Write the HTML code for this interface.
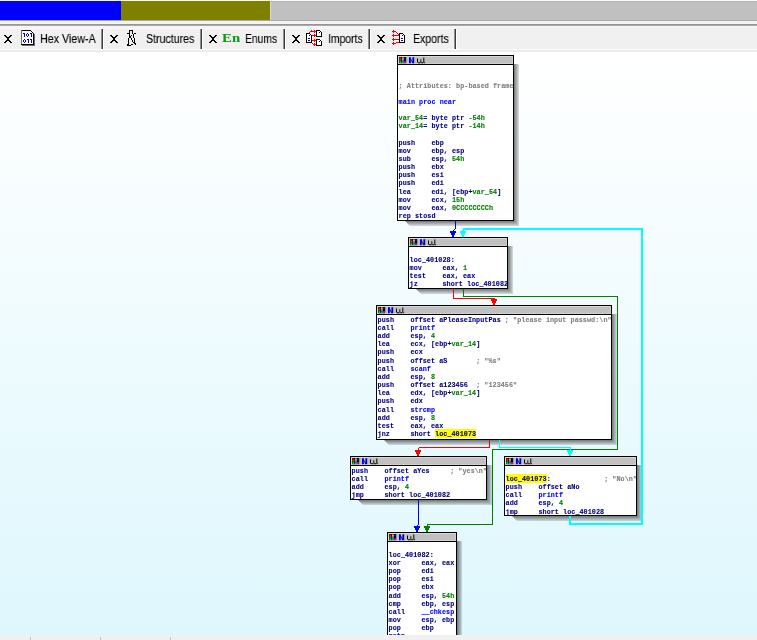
<!DOCTYPE html>
<html><head><meta charset="utf-8"><style>
html,body{margin:0;padding:0;width:757px;height:640px;overflow:hidden;background:#f0f0f0;position:relative}
div{box-sizing:border-box}
.abs{position:absolute}
.canvas{position:absolute;left:0;top:52px;width:757px;height:583px;background:linear-gradient(#ffffff,#def7fd)}
.shr{position:absolute;width:5px;background:linear-gradient(90deg,rgba(0,0,0,.52),rgba(0,0,0,.12));clip-path:polygon(0 0,100% 0,100% 100%,0 calc(100% - 5px))}
.shb{position:absolute;height:5px;background:linear-gradient(180deg,rgba(0,0,0,.52),rgba(0,0,0,.12));clip-path:polygon(0 0,calc(100% - 5px) 0,100% 100%,5px 100%)}
.blk{position:absolute;will-change:transform;border:1px solid #000;background:#fff;box-sizing:content-box;overflow:hidden}
.hdr{position:absolute;left:0;top:0;right:0;height:9px;background:#c0c0c0;border-bottom:1px solid #000;box-sizing:border-box;box-shadow:inset 1px 1px #d8d8d8,inset -1px -1px #d0d0d0}
.ln{position:absolute;left:0.6px;height:8px;font:bold 6.78px/8px "Liberation Mono",monospace;white-space:pre;color:#000080;-webkit-text-stroke:0.1px currentColor;letter-spacing:0.045px}
.sep{position:absolute;top:29px;width:1px;height:20px;background:#3c3c3c;border-left:1px solid #909090;border-right:1px solid #fff;box-sizing:content-box}
.lbl{position:absolute;top:32px;font:12.5px/14px "Liberation Sans",sans-serif;color:#000;white-space:pre;transform-origin:0 0;will-change:transform;-webkit-text-stroke:0.12px #000}
</style></head><body>
<div class="abs" style="left:0;top:0;width:757px;height:1px;background:#f8f8f8"></div><div class="abs" style="left:0;top:1px;width:121px;height:19px;background:#0000ff"></div><div class="abs" style="left:121px;top:1px;width:149px;height:19px;background:#808000"></div><div class="abs" style="left:270px;top:1px;width:1px;height:19px;background:#d8d8e0"></div><div class="abs" style="left:271px;top:1px;width:486px;height:19px;background:#c0c0c0;border-top:1px solid #b4b4b4"></div><div class="abs" style="left:0;top:20px;width:757px;height:1px;background:#a8a8a8"></div><div class="abs" style="left:0;top:21px;width:757px;height:3px;background:#f4f4f4"></div><div class="abs" style="left:0;top:24px;width:757px;height:1px;background:#969696"></div><div class="abs" style="left:0;top:25px;width:757px;height:1px;background:#a8a8a8"></div><div class="abs" style="left:0;top:26px;width:757px;height:23px;background:#f0f0f0"></div><div class="abs" style="left:0;top:26px;width:757px;height:1px;background:#f8f8f8"></div><div class="abs" style="left:0;top:27px;width:757px;height:1px;background:#f3f3f3"></div><div class="abs" style="left:0;top:28px;width:455px;height:1px;background:#fafafa"></div><div class="abs" style="left:0;top:49px;width:757px;height:1px;background:#fafafa"></div><div class="abs" style="left:0;top:50px;width:757px;height:2px;background:#ececec"></div><svg style="position:absolute;left:0;top:0" width="14" height="50" shape-rendering="crispEdges"><path d="M4 35h2v1h-2zM10 35h2v1h-2zM5 36h2v1h-2zM9 36h2v1h-2zM6 37h4v1h-4zM7 38h2v1h-2zM7 39h2v1h-2zM6 40h4v1h-4zM5 41h2v1h-2zM9 41h2v1h-2zM4 42h2v1h-2zM10 42h2v1h-2z" fill="#000"/></svg><svg style="position:absolute;left:0;top:0" width="120" height="50" shape-rendering="crispEdges"><path d="M110 35h2v1h-2zM116 35h2v1h-2zM111 36h2v1h-2zM115 36h2v1h-2zM112 37h4v1h-4zM113 38h2v1h-2zM113 39h2v1h-2zM112 40h4v1h-4zM111 41h2v1h-2zM115 41h2v1h-2zM110 42h2v1h-2zM116 42h2v1h-2z" fill="#000"/></svg><svg style="position:absolute;left:0;top:0" width="219" height="50" shape-rendering="crispEdges"><path d="M209 35h2v1h-2zM215 35h2v1h-2zM210 36h2v1h-2zM214 36h2v1h-2zM211 37h4v1h-4zM212 38h2v1h-2zM212 39h2v1h-2zM211 40h4v1h-4zM210 41h2v1h-2zM214 41h2v1h-2zM209 42h2v1h-2zM215 42h2v1h-2z" fill="#000"/></svg><svg style="position:absolute;left:0;top:0" width="302" height="50" shape-rendering="crispEdges"><path d="M292 35h2v1h-2zM298 35h2v1h-2zM293 36h2v1h-2zM297 36h2v1h-2zM294 37h4v1h-4zM295 38h2v1h-2zM295 39h2v1h-2zM294 40h4v1h-4zM293 41h2v1h-2zM297 41h2v1h-2zM292 42h2v1h-2zM298 42h2v1h-2z" fill="#000"/></svg><svg style="position:absolute;left:0;top:0" width="387" height="50" shape-rendering="crispEdges"><path d="M377 35h2v1h-2zM383 35h2v1h-2zM378 36h2v1h-2zM382 36h2v1h-2zM379 37h4v1h-4zM380 38h2v1h-2zM380 39h2v1h-2zM379 40h4v1h-4zM378 41h2v1h-2zM382 41h2v1h-2zM377 42h2v1h-2zM383 42h2v1h-2z" fill="#000"/></svg><svg style="position:absolute;left:0;top:0" width="40" height="50" shape-rendering="crispEdges"><path d="M21 30h10l3 3v12h-13z" fill="#fff"/><path d="M21 30h10v1h-10zM31 31h1v1h-1zM32 32h1v1h-1z" fill="#000"/><path d="M21 30h1v15h-1zM34 34h1v11h-1zM22 45h13v1h-13z" fill="#707070"/><path d="M33 33h1v12h-1zM21 44h13v1h-13z" fill="#000"/><path d="M24 33h1v4h-1zM23 33h1v1h-1zM27 33h1v1h-1zM26 34h1v2h-1zM28 34h1v2h-1zM27 36h1v1h-1zM31 33h1v4h-1zM30 33h1v1h-1zM24 39h1v1h-1zM23 40h1v2h-1zM25 40h1v2h-1zM24 42h1v1h-1zM28 39h1v4h-1zM27 39h1v1h-1zM31 39h1v4h-1zM30 39h1v1h-1z" fill="#0000c0"/></svg><svg style="position:absolute;left:0;top:0" width="140" height="50" shape-rendering="crispEdges"><path d="M129 30h4v1h-4zM129 31h1v3h-1zM132 31h1v3h-1zM127 33h2v1h-2zM134 33h2v1h-2zM129 34h1v4h-1zM128 38h1v6h-1zM133 34h1v4h-1zM134 38h1v5h-1zM131 35h1v1h-1zM130 36h1v2h-1zM131 38h1v2h-1zM132 40h1v2h-1zM133 42h1v1h-1zM134 43h1v1h-1zM127 44h2v2h-2zM135 43h1v2h-1zM129 45h2v1h-2zM131 44h2v1h-2z" fill="#000"/></svg><div style="position:absolute;left:221.5px;top:31px;font:bold 13px/14px 'Liberation Serif';color:#00a000;transform:scaleX(1.14);transform-origin:0 0;will-change:transform">En</div><svg style="position:absolute;left:0;top:0" width="330" height="50" shape-rendering="crispEdges"><path d="M306 33h4l2 2v8h-6z" fill="#fff"/><path d="M306 33h4v1h-4zM306 33h1v10h-1zM306 42h6v1h-6zM311 35h1v8h-1zM310 34h1v1h-1zM309 35h1v1h-1z" fill="#000"/><path d="M308 38h2v1h-2zM308 40h2v1h-2z" fill="#0000a0"/><path d="M316 30h4l2 2v5h-6z" fill="#fff"/><path d="M316 30h4v1h-4zM316 30h1v7h-1zM316 36h6v1h-6zM321 32h1v5h-1zM320 31h1v1h-1zM319 32h1v1h-1z" fill="#000"/><path d="M316 39h4l2 2v5h-6z" fill="#fff"/><path d="M316 39h4v1h-4zM316 39h1v7h-1zM316 45h6v1h-6zM321 41h1v5h-1zM320 40h1v1h-1zM319 41h1v1h-1z" fill="#000"/><path d="M309 32h1v1h-1zM310 31h1v1h-1zM311 30h1v1h-1z" fill="#f00"/><path d="M311 31h5v1h-5zM314 30h1v3h-1zM315 31h1v1h-1z" fill="#f00"/><path d="M312 35h4v1h-4zM314 34h1v3h-1zM315 35h1v1h-1z" fill="#f00"/><path d="M312 40h4v1h-4zM314 39h1v3h-1zM315 40h1v1h-1z" fill="#f00"/><path d="M312 43h1v1h-1zM313 44h1v1h-1z" fill="#f00"/><path d="M313 44h3v1h-3zM314 43h1v3h-1zM315 44h1v1h-1z" fill="#f00"/></svg><svg style="position:absolute;left:0;top:0" width="420" height="50" shape-rendering="crispEdges"><path d="M399 33h4l2 2v8h-6z" fill="#fff"/><path d="M399 33h4v1h-4zM399 33h1v10h-1zM399 42h6v1h-6zM404 35h1v8h-1zM403 34h1v1h-1zM402 35h1v1h-1z" fill="#000"/><path d="M401 38h2v1h-2zM401 40h2v1h-2z" fill="#0000a0"/><path d="M393 30h1v3h-1zM392 31h3v1h-3zM395 31h1v1h-1zM396 32h1v1h-1zM397 33h1v1h-1zM398 34h1v1h-1z" fill="#f00"/><path d="M393 34h1v3h-1zM392 35h7v1h-7z" fill="#f00"/><path d="M393 38h1v3h-1zM392 39h7v1h-7z" fill="#f00"/><path d="M393 42h1v3h-1zM392 43h4v1h-4zM396 42h3v1h-3z" fill="#f00"/></svg><div class="sep" style="left:101px"></div><div class="sep" style="left:200px"></div><div class="sep" style="left:283px"></div><div class="sep" style="left:368px"></div><div class="sep" style="left:454px"></div><div class="lbl" style="left:39.74px;transform:scaleX(0.8563)">Hex View-A</div><div class="lbl" style="left:145.95px;transform:scaleX(0.8482)">Structures</div><div class="lbl" style="left:245.18px;transform:scaleX(0.8237)">Enums</div><div class="lbl" style="left:327.97px;transform:scaleX(0.8300)">Imports</div><div class="lbl" style="left:412.96px;transform:scaleX(0.8415)">Exports</div><div class="canvas"></div><div class="shr" style="left:514px;top:64px;height:162px"></div><div class="shb" style="left:405px;top:221px;width:114px"></div><div class="blk" style="left:397px;top:55px;width:115px;height:164px"><div class="hdr"></div><svg style="position:absolute;left:0px;top:0px" width="32" height="8"><rect x="1.2" y="1" width="7" height="6.2" fill="#000"/><rect x="1.6" y="1.4" width="1.8" height="1.6" fill="#f00"/><rect x="4.2" y="1.4" width="1.5" height="1.6" fill="#ff0"/><rect x="6.1" y="1.4" width="1.8" height="1.6" fill="#00f"/><rect x="1.6" y="3.2" width="1.8" height="1.5" fill="#777"/><rect x="4.2" y="3.2" width="1.5" height="1.5" fill="#ddd"/><rect x="6.1" y="3.2" width="1.8" height="1.5" fill="#000"/><rect x="1.6" y="5.3" width="1.8" height="1.6" fill="#0f0"/><rect x="4.2" y="5.3" width="1.5" height="1.6" fill="#0ff"/><rect x="6.1" y="5.3" width="1.8" height="1.6" fill="#f0f"/><path d="M11 1.3h1.8v5.9h-1.8zM14.4 1.3h1.8v5.9h-1.8zM12.6 1.8l2 4.5v0.9h-0.4l-1.8-4.3z" fill="#0000c0"/><path d="M19 2.5h1v4h-1zM22.4 3.2h0.9v3.3h-0.9zM25.3 1.5h1v5h-1zM20 6.2h2.4v1h-2.4zM23.3 6.2h2v1h-2zM26.3 6.2h0.8v1h-0.8z" fill="#000"/></svg><div class="ln" style="top:9.00px"></div><div class="ln" style="top:17.00px"></div><div class="ln" style="top:26.00px"><span style="color:#808080">; Attributes: bp-based frame</span></div><div class="ln" style="top:34.00px"></div><div class="ln" style="top:42.00px"><span style="color:#0000ff">main proc near</span></div><div class="ln" style="top:50.00px"></div><div class="ln" style="top:58.00px"><span style="color:#008000">var_54</span><span style="color:#000080">= byte ptr </span><span style="color:#008000">-54h</span></div><div class="ln" style="top:66.00px"><span style="color:#008000">var_14</span><span style="color:#000080">= byte ptr </span><span style="color:#008000">-14h</span></div><div class="ln" style="top:74.00px"></div><div class="ln" style="top:83.00px"><span style="color:#000080">push    ebp</span></div><div class="ln" style="top:91.00px"><span style="color:#000080">mov     ebp, esp</span></div><div class="ln" style="top:99.00px"><span style="color:#000080">sub     esp, </span><span style="color:#008000">54h</span></div><div class="ln" style="top:107.00px"><span style="color:#000080">push    ebx</span></div><div class="ln" style="top:115.00px"><span style="color:#000080">push    esi</span></div><div class="ln" style="top:123.00px"><span style="color:#000080">push    edi</span></div><div class="ln" style="top:132.00px"><span style="color:#000080">lea     edi, [ebp+</span><span style="color:#008000">var_54</span><span style="color:#000080">]</span></div><div class="ln" style="top:140.00px"><span style="color:#000080">mov     ecx, </span><span style="color:#008000">15h</span></div><div class="ln" style="top:148.00px"><span style="color:#000080">mov     eax, </span><span style="color:#008000">0CCCCCCCCh</span></div><div class="ln" style="top:156.00px"><span style="color:#000080">rep stosd</span></div></div><div class="shr" style="left:508px;top:246px;height:48px"></div><div class="shb" style="left:416px;top:289px;width:97px"></div><div class="blk" style="left:408px;top:237px;width:98px;height:50px"><div class="hdr"></div><svg style="position:absolute;left:0px;top:0px" width="32" height="8"><rect x="1.2" y="1" width="7" height="6.2" fill="#000"/><rect x="1.6" y="1.4" width="1.8" height="1.6" fill="#f00"/><rect x="4.2" y="1.4" width="1.5" height="1.6" fill="#ff0"/><rect x="6.1" y="1.4" width="1.8" height="1.6" fill="#00f"/><rect x="1.6" y="3.2" width="1.8" height="1.5" fill="#777"/><rect x="4.2" y="3.2" width="1.5" height="1.5" fill="#ddd"/><rect x="6.1" y="3.2" width="1.8" height="1.5" fill="#000"/><rect x="1.6" y="5.3" width="1.8" height="1.6" fill="#0f0"/><rect x="4.2" y="5.3" width="1.5" height="1.6" fill="#0ff"/><rect x="6.1" y="5.3" width="1.8" height="1.6" fill="#f0f"/><path d="M11 1.3h1.8v5.9h-1.8zM14.4 1.3h1.8v5.9h-1.8zM12.6 1.8l2 4.5v0.9h-0.4l-1.8-4.3z" fill="#0000c0"/><path d="M19 2.5h1v4h-1zM22.4 3.2h0.9v3.3h-0.9zM25.3 1.5h1v5h-1zM20 6.2h2.4v1h-2.4zM23.3 6.2h2v1h-2zM26.3 6.2h0.8v1h-0.8z" fill="#000"/></svg><div class="ln" style="top:10.00px"></div><div class="ln" style="top:18.00px"><span style="color:#000080">loc_401028:</span></div><div class="ln" style="top:26.00px"><span style="color:#000080">mov     eax, </span><span style="color:#008000">1</span></div><div class="ln" style="top:34.00px"><span style="color:#000080">test    eax, eax</span></div><div class="ln" style="top:42.00px"><span style="color:#000080">jz      short loc_401082</span></div></div><div class="shr" style="left:612px;top:314px;height:131px"></div><div class="shb" style="left:384px;top:440px;width:233px"></div><div class="blk" style="left:376px;top:305px;width:234px;height:133px"><div class="hdr"></div><svg style="position:absolute;left:0px;top:0px" width="32" height="8"><rect x="1.2" y="1" width="7" height="6.2" fill="#000"/><rect x="1.6" y="1.4" width="1.8" height="1.6" fill="#f00"/><rect x="4.2" y="1.4" width="1.5" height="1.6" fill="#ff0"/><rect x="6.1" y="1.4" width="1.8" height="1.6" fill="#00f"/><rect x="1.6" y="3.2" width="1.8" height="1.5" fill="#777"/><rect x="4.2" y="3.2" width="1.5" height="1.5" fill="#ddd"/><rect x="6.1" y="3.2" width="1.8" height="1.5" fill="#000"/><rect x="1.6" y="5.3" width="1.8" height="1.6" fill="#0f0"/><rect x="4.2" y="5.3" width="1.5" height="1.6" fill="#0ff"/><rect x="6.1" y="5.3" width="1.8" height="1.6" fill="#f0f"/><path d="M11 1.3h1.8v5.9h-1.8zM14.4 1.3h1.8v5.9h-1.8zM12.6 1.8l2 4.5v0.9h-0.4l-1.8-4.3z" fill="#0000c0"/><path d="M19 2.5h1v4h-1zM22.4 3.2h0.9v3.3h-0.9zM25.3 1.5h1v5h-1zM20 6.2h2.4v1h-2.4zM23.3 6.2h2v1h-2zM26.3 6.2h0.8v1h-0.8z" fill="#000"/></svg><div class="ln" style="top:10.00px"><span style="color:#000080">push    offset aPleaseInputPas </span><span style="color:#808080">; "please input passwd:\n"</span></div><div class="ln" style="top:18.00px"><span style="color:#000080">call    </span><span style="color:#0000ff">printf</span></div><div class="ln" style="top:26.00px"><span style="color:#000080">add     esp, </span><span style="color:#008000">4</span></div><div class="ln" style="top:34.00px"><span style="color:#000080">lea     ecx, [ebp+</span><span style="color:#008000">var_14</span><span style="color:#000080">]</span></div><div class="ln" style="top:42.00px"><span style="color:#000080">push    ecx</span></div><div class="ln" style="top:51.00px"><span style="color:#000080">push    offset aS       </span><span style="color:#808080">; "%s"</span></div><div class="ln" style="top:59.00px"><span style="color:#000080">call    </span><span style="color:#0000ff">scanf</span></div><div class="ln" style="top:67.00px"><span style="color:#000080">add     esp, </span><span style="color:#008000">8</span></div><div class="ln" style="top:75.00px"><span style="color:#000080">push    offset a123456  </span><span style="color:#808080">; "123456"</span></div><div class="ln" style="top:83.00px"><span style="color:#000080">lea     edx, [ebp+</span><span style="color:#008000">var_14</span><span style="color:#000080">]</span></div><div class="ln" style="top:91.00px"><span style="color:#000080">push    edx</span></div><div class="ln" style="top:100.00px"><span style="color:#000080">call    </span><span style="color:#0000ff">strcmp</span></div><div class="ln" style="top:108.00px"><span style="color:#000080">add     esp, </span><span style="color:#008000">8</span></div><div class="ln" style="top:116.00px"><span style="color:#000080">test    eax, eax</span></div><div class="ln" style="top:124.00px"><span style="color:#000080">jnz     short </span><span style="color:#000080;background:#ffff00;padding-top:1px">loc_401073</span></div></div><div class="shr" style="left:487px;top:465px;height:40px"></div><div class="shb" style="left:358px;top:500px;width:134px"></div><div class="blk" style="left:350px;top:456px;width:135px;height:42px"><div class="hdr"></div><svg style="position:absolute;left:0px;top:0px" width="32" height="8"><rect x="1.2" y="1" width="7" height="6.2" fill="#000"/><rect x="1.6" y="1.4" width="1.8" height="1.6" fill="#f00"/><rect x="4.2" y="1.4" width="1.5" height="1.6" fill="#ff0"/><rect x="6.1" y="1.4" width="1.8" height="1.6" fill="#00f"/><rect x="1.6" y="3.2" width="1.8" height="1.5" fill="#777"/><rect x="4.2" y="3.2" width="1.5" height="1.5" fill="#ddd"/><rect x="6.1" y="3.2" width="1.8" height="1.5" fill="#000"/><rect x="1.6" y="5.3" width="1.8" height="1.6" fill="#0f0"/><rect x="4.2" y="5.3" width="1.5" height="1.6" fill="#0ff"/><rect x="6.1" y="5.3" width="1.8" height="1.6" fill="#f0f"/><path d="M11 1.3h1.8v5.9h-1.8zM14.4 1.3h1.8v5.9h-1.8zM12.6 1.8l2 4.5v0.9h-0.4l-1.8-4.3z" fill="#0000c0"/><path d="M19 2.5h1v4h-1zM22.4 3.2h0.9v3.3h-0.9zM25.3 1.5h1v5h-1zM20 6.2h2.4v1h-2.4zM23.3 6.2h2v1h-2zM26.3 6.2h0.8v1h-0.8z" fill="#000"/></svg><div class="ln" style="top:10.00px"><span style="color:#000080">push    offset aYes     </span><span style="color:#808080">; "yes\n"</span></div><div class="ln" style="top:18.00px"><span style="color:#000080">call    </span><span style="color:#0000ff">printf</span></div><div class="ln" style="top:26.00px"><span style="color:#000080">add     esp, </span><span style="color:#008000">4</span></div><div class="ln" style="top:34.00px"><span style="color:#000080">jmp     short loc_401082</span></div></div><div class="shr" style="left:637px;top:465px;height:56px"></div><div class="shb" style="left:512px;top:516px;width:130px"></div><div class="blk" style="left:504px;top:456px;width:131px;height:58px"><div class="hdr"></div><svg style="position:absolute;left:0px;top:0px" width="32" height="8"><rect x="1.2" y="1" width="7" height="6.2" fill="#000"/><rect x="1.6" y="1.4" width="1.8" height="1.6" fill="#f00"/><rect x="4.2" y="1.4" width="1.5" height="1.6" fill="#ff0"/><rect x="6.1" y="1.4" width="1.8" height="1.6" fill="#00f"/><rect x="1.6" y="3.2" width="1.8" height="1.5" fill="#777"/><rect x="4.2" y="3.2" width="1.5" height="1.5" fill="#ddd"/><rect x="6.1" y="3.2" width="1.8" height="1.5" fill="#000"/><rect x="1.6" y="5.3" width="1.8" height="1.6" fill="#0f0"/><rect x="4.2" y="5.3" width="1.5" height="1.6" fill="#0ff"/><rect x="6.1" y="5.3" width="1.8" height="1.6" fill="#f0f"/><path d="M11 1.3h1.8v5.9h-1.8zM14.4 1.3h1.8v5.9h-1.8zM12.6 1.8l2 4.5v0.9h-0.4l-1.8-4.3z" fill="#0000c0"/><path d="M19 2.5h1v4h-1zM22.4 3.2h0.9v3.3h-0.9zM25.3 1.5h1v5h-1zM20 6.2h2.4v1h-2.4zM23.3 6.2h2v1h-2zM26.3 6.2h0.8v1h-0.8z" fill="#000"/></svg><div class="ln" style="top:10.00px"></div><div class="ln" style="top:18.00px"><span style="color:#000080;background:#ffff00;padding-top:1px">loc_401073</span><span style="color:#000080">:             </span><span style="color:#808080">; "No\n"</span></div><div class="ln" style="top:26.00px"><span style="color:#000080">push    offset aNo</span></div><div class="ln" style="top:34.00px"><span style="color:#000080">call    </span><span style="color:#0000ff">printf</span></div><div class="ln" style="top:42.00px"><span style="color:#000080">add     esp, </span><span style="color:#008000">4</span></div><div class="ln" style="top:51.00px"><span style="color:#000080">jmp     short loc_401028</span></div></div><div class="shr" style="left:457px;top:541px;height:125px"></div><div class="shb" style="left:395px;top:661px;width:67px"></div><div class="blk" style="left:387px;top:532px;width:68px;height:127px"><div class="hdr"></div><svg style="position:absolute;left:0px;top:0px" width="32" height="8"><rect x="1.2" y="1" width="7" height="6.2" fill="#000"/><rect x="1.6" y="1.4" width="1.8" height="1.6" fill="#f00"/><rect x="4.2" y="1.4" width="1.5" height="1.6" fill="#ff0"/><rect x="6.1" y="1.4" width="1.8" height="1.6" fill="#00f"/><rect x="1.6" y="3.2" width="1.8" height="1.5" fill="#777"/><rect x="4.2" y="3.2" width="1.5" height="1.5" fill="#ddd"/><rect x="6.1" y="3.2" width="1.8" height="1.5" fill="#000"/><rect x="1.6" y="5.3" width="1.8" height="1.6" fill="#0f0"/><rect x="4.2" y="5.3" width="1.5" height="1.6" fill="#0ff"/><rect x="6.1" y="5.3" width="1.8" height="1.6" fill="#f0f"/><path d="M11 1.3h1.8v5.9h-1.8zM14.4 1.3h1.8v5.9h-1.8zM12.6 1.8l2 4.5v0.9h-0.4l-1.8-4.3z" fill="#0000c0"/><path d="M19 2.5h1v4h-1zM22.4 3.2h0.9v3.3h-0.9zM25.3 1.5h1v5h-1zM20 6.2h2.4v1h-2.4zM23.3 6.2h2v1h-2zM26.3 6.2h0.8v1h-0.8z" fill="#000"/></svg><div class="ln" style="top:10.00px"></div><div class="ln" style="top:18.00px"><span style="color:#000080">loc_401082:</span></div><div class="ln" style="top:26.00px"><span style="color:#000080">xor     eax, eax</span></div><div class="ln" style="top:34.00px"><span style="color:#000080">pop     edi</span></div><div class="ln" style="top:42.00px"><span style="color:#000080">pop     esi</span></div><div class="ln" style="top:50.00px"><span style="color:#000080">pop     ebx</span></div><div class="ln" style="top:59.00px"><span style="color:#000080">add     esp, </span><span style="color:#008000">54h</span></div><div class="ln" style="top:67.00px"><span style="color:#000080">cmp     ebp, esp</span></div><div class="ln" style="top:75.00px"><span style="color:#000080">call    </span><span style="color:#0000ff">__chkesp</span></div><div class="ln" style="top:83.00px"><span style="color:#000080">mov     esp, ebp</span></div><div class="ln" style="top:91.00px"><span style="color:#000080">pop     ebp</span></div><div class="ln" style="top:99.00px"><span style="color:#000080">retn</span></div><div class="ln" style="top:107.00px"></div><div class="ln" style="top:116.00px"></div></div><svg style="position:absolute;left:0;top:0" width="757" height="640" shape-rendering="crispEdges"><path d="M455 221h1v8h-1zM454 229h1v1h-1zM453 230h1v1h-1zM450 231h6v2h-6zM451 233h4v2h-4zM452 235h2v2h-2z" fill="#0000ff"/><path d="M569 516h2v9h-2zM569 523h74v2h-74zM641 228h2v297h-2zM463 228h180v2h-180zM462 230h2v1h-2zM460 231h6v2h-6zM461 233h4v2h-4zM462 235h2v2h-2z" fill="#00ffff"/><path d="M453 289h1v10h-1zM453 298h42v1h-42zM491 299h6v2h-6zM492 301h4v2h-4zM493 303h2v2h-2z" fill="#ff0000"/><path d="M463 289h1v8h-1zM463 296h155v1h-155zM617 296h1v154h-1zM492 449h126v1h-126zM492 449h1v76h-1zM427 524h66v1h-66zM427 525h1v1h-1zM424 526h6v2h-6zM425 528h4v2h-4zM426 530h2v2h-2z" fill="#008000"/><path d="M489 440h1v8h-1zM419 447h71v1h-71zM418 448h1v2h-1zM415 450h6v2h-6zM416 452h4v2h-4zM417 454h2v2h-2z" fill="#ff0000"/><path d="M499 440h1v8h-1zM499 447h72v1h-72zM570 448h1v2h-1zM567 450h6v2h-6zM568 452h4v2h-4zM569 454h2v2h-2z" fill="#00ffff"/><path d="M418 500h1v25h-1zM417 525h1v1h-1zM414 526h6v2h-6zM415 528h4v2h-4zM416 530h2v2h-2z" fill="#0000ff"/></svg><div class="abs" style="left:0;top:635px;width:757px;height:5px;background:#f0f0f0"></div><div class="abs" style="left:30px;top:637px;width:1px;height:3px;background:#c4c4c4"></div><div class="abs" style="left:100px;top:637px;width:1px;height:3px;background:#c4c4c4"></div><div class="abs" style="left:170px;top:637px;width:1px;height:3px;background:#c4c4c4"></div></body></html>
